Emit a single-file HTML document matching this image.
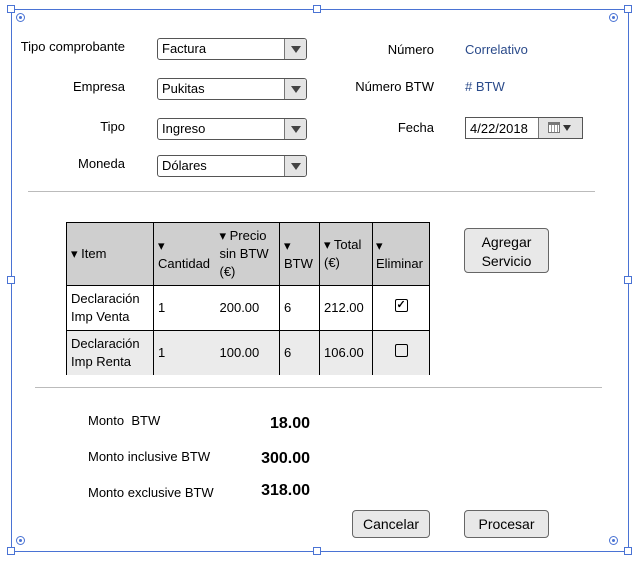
<!DOCTYPE html>
<html><head><meta charset="utf-8"><style>
*{margin:0;padding:0;box-sizing:border-box}
body{width:638px;height:566px;background:#fff;position:relative;font-family:"Liberation Sans",Arial,sans-serif;font-size:13px;color:#000;overflow:hidden}
.a{position:absolute}
.lbl{position:absolute;text-align:right;width:200px;white-space:nowrap}
.sel{position:absolute;left:157px;width:150px;height:22px;border:1px solid #555;border-radius:3px;background:#fff;padding:2px 0 0 4px;font-size:13px}
.sel .b{position:absolute;right:0;top:0;width:22px;height:20px;border-left:1px solid #777;background:#e4e4e4;border-radius:0 3px 3px 0}
.tri{position:absolute;left:6px;top:7px;width:0;height:0;border-left:5px solid transparent;border-right:5px solid transparent;border-top:7px solid #444}
.h{position:absolute;width:8px;height:8px;border:1px solid #4a73d4;background:#fff}
.r{position:absolute;width:9px;height:9px;border:1px solid #4a73d4;border-radius:50%;background:#fff}
.r:after{content:"";position:absolute;left:2px;top:2px;width:3px;height:3px;border-radius:50%;background:#4a73d4}
.btn{position:absolute;border:1px solid #666;border-radius:4px;background:#e8e8e8;text-align:center;font-size:14px}
table{position:absolute;left:66px;top:222px;border-collapse:collapse;font-size:13px;table-layout:fixed;width:363px}
td{border:1px solid #000;padding:0 0 0 4px;vertical-align:middle;line-height:18px;overflow:hidden;white-space:nowrap}
td.nr{border-right:none}
td.nl{border-left:none}
thead td{background:#cfcfcf;height:63px}
.r1 td{height:45px}
.r2 td{height:44px;background:#ebebeb;border-bottom:none}
.cb{display:inline-block;width:13px;height:13px;border:1.5px solid #000;border-radius:2px;position:relative}
.v{position:absolute;font-weight:bold;font-size:16px;text-align:right;width:100px;left:210px}
</style></head><body>
<div class="a" style="left:11px;top:9px;width:618px;height:543px;border:1px solid #4a73d4"></div>
<div class="h" style="left:7px;top:5px"></div><div class="h" style="left:313px;top:5px"></div><div class="h" style="left:624px;top:5px"></div>
<div class="h" style="left:7px;top:276px"></div><div class="h" style="left:624px;top:276px"></div>
<div class="h" style="left:7px;top:547px"></div><div class="h" style="left:313px;top:547px"></div><div class="h" style="left:624px;top:547px"></div>
<div class="r" style="left:16px;top:13px"></div><div class="r" style="left:609px;top:13px"></div>
<div class="r" style="left:16px;top:536px"></div><div class="r" style="left:609px;top:536px"></div>

<div class="lbl" style="left:-75px;top:39px">Tipo comprobante</div>
<div class="lbl" style="left:-75px;top:79px">Empresa</div>
<div class="lbl" style="left:-75px;top:119px">Tipo</div>
<div class="lbl" style="left:-75px;top:156px">Moneda</div>
<div class="sel" style="top:38px">Factura<div class="b"><div class="tri"></div></div></div>
<div class="sel" style="top:78px">Pukitas<div class="b"><div class="tri"></div></div></div>
<div class="sel" style="top:118px">Ingreso<div class="b"><div class="tri"></div></div></div>
<div class="sel" style="top:155px">Dólares<div class="b"><div class="tri"></div></div></div>

<div class="lbl" style="left:234px;top:42px">Número</div>
<div class="lbl" style="left:234px;top:79px">Número BTW</div>
<div class="lbl" style="left:234px;top:120px">Fecha</div>
<div class="a" style="left:465px;top:42px;color:#2a4a8a">Correlativo</div>
<div class="a" style="left:465px;top:79px;color:#2a4a8a"># BTW</div>
<div class="a" style="left:465px;top:117px;width:118px;height:22px;border:1px solid #555;padding:3px 0 0 4px">4/22/2018
<div class="a" style="left:72px;top:0;width:44px;height:20px;border-left:1px solid #777;background:#e4e4e4">
<div class="a" style="left:9px;top:4px;width:12px;height:11px;border:1px solid #777;border-top:3px solid #777;background:repeating-linear-gradient(90deg,#fff 0 2px,#999 2px 3px)"></div>
<div class="a" style="left:24px;top:7px;border-left:4px solid transparent;border-right:4px solid transparent;border-top:6px solid #333"></div></div></div>

<div class="a" style="left:28px;top:191px;width:567px;height:1px;background:#bbb"></div>

<table>
<colgroup><col style="width:87px"><col style="width:63px"><col style="width:63px"><col style="width:40px"><col style="width:53px"><col style="width:57px"></colgroup>
<thead><tr><td>▾ Item</td><td class="nr" style="vertical-align:bottom;padding-bottom:12px">▾<br>Cantidad</td><td class="nl" style="padding-left:3px">▾ Precio<br>sin BTW<br>(€)</td><td style="vertical-align:bottom;padding-bottom:12px;padding-left:4px">▾<br>BTW</td><td style="padding-left:4px">▾ Total<br>(€)</td><td style="vertical-align:bottom;padding-bottom:12px;padding-left:3px">▾<br>Eliminar</td></tr></thead>
<tbody>
<tr class="r1"><td>Declaración<br>Imp Venta</td><td class="nr">1</td><td class="nl" style="padding-left:3px">200.00</td><td>6</td><td style="padding-left:4px">212.00</td><td style="text-align:center;padding:0"><span class="cb"><span class="a" style="left:1px;top:-4px;font-size:11px;font-weight:bold">✓</span></span></td></tr>
<tr class="r2"><td>Declaración<br>Imp Renta</td><td class="nr">1</td><td class="nl" style="padding-left:3px">100.00</td><td>6</td><td style="padding-left:4px">106.00</td><td style="text-align:center;padding:0"><span class="cb"></span></td></tr>
</tbody></table>

<div class="btn" style="left:464px;top:228px;width:85px;height:45px;padding-top:4px;line-height:19px">Agregar<br>Servicio</div>

<div class="a" style="left:35px;top:387px;width:567px;height:1px;background:#bbb"></div>

<div class="a" style="left:88px;top:413px">Monto&nbsp; BTW</div>
<div class="a" style="left:88px;top:449px">Monto inclusive BTW</div>
<div class="a" style="left:88px;top:485px">Monto exclusive BTW</div>
<div class="v" style="top:415px">18.00</div>
<div class="v" style="top:450px">300.00</div>
<div class="v" style="top:482px">318.00</div>

<div class="btn" style="left:352px;top:510px;width:78px;height:28px;padding-top:5px">Cancelar</div>
<div class="btn" style="left:464px;top:510px;width:85px;height:28px;padding-top:5px">Procesar</div>
</body></html>
